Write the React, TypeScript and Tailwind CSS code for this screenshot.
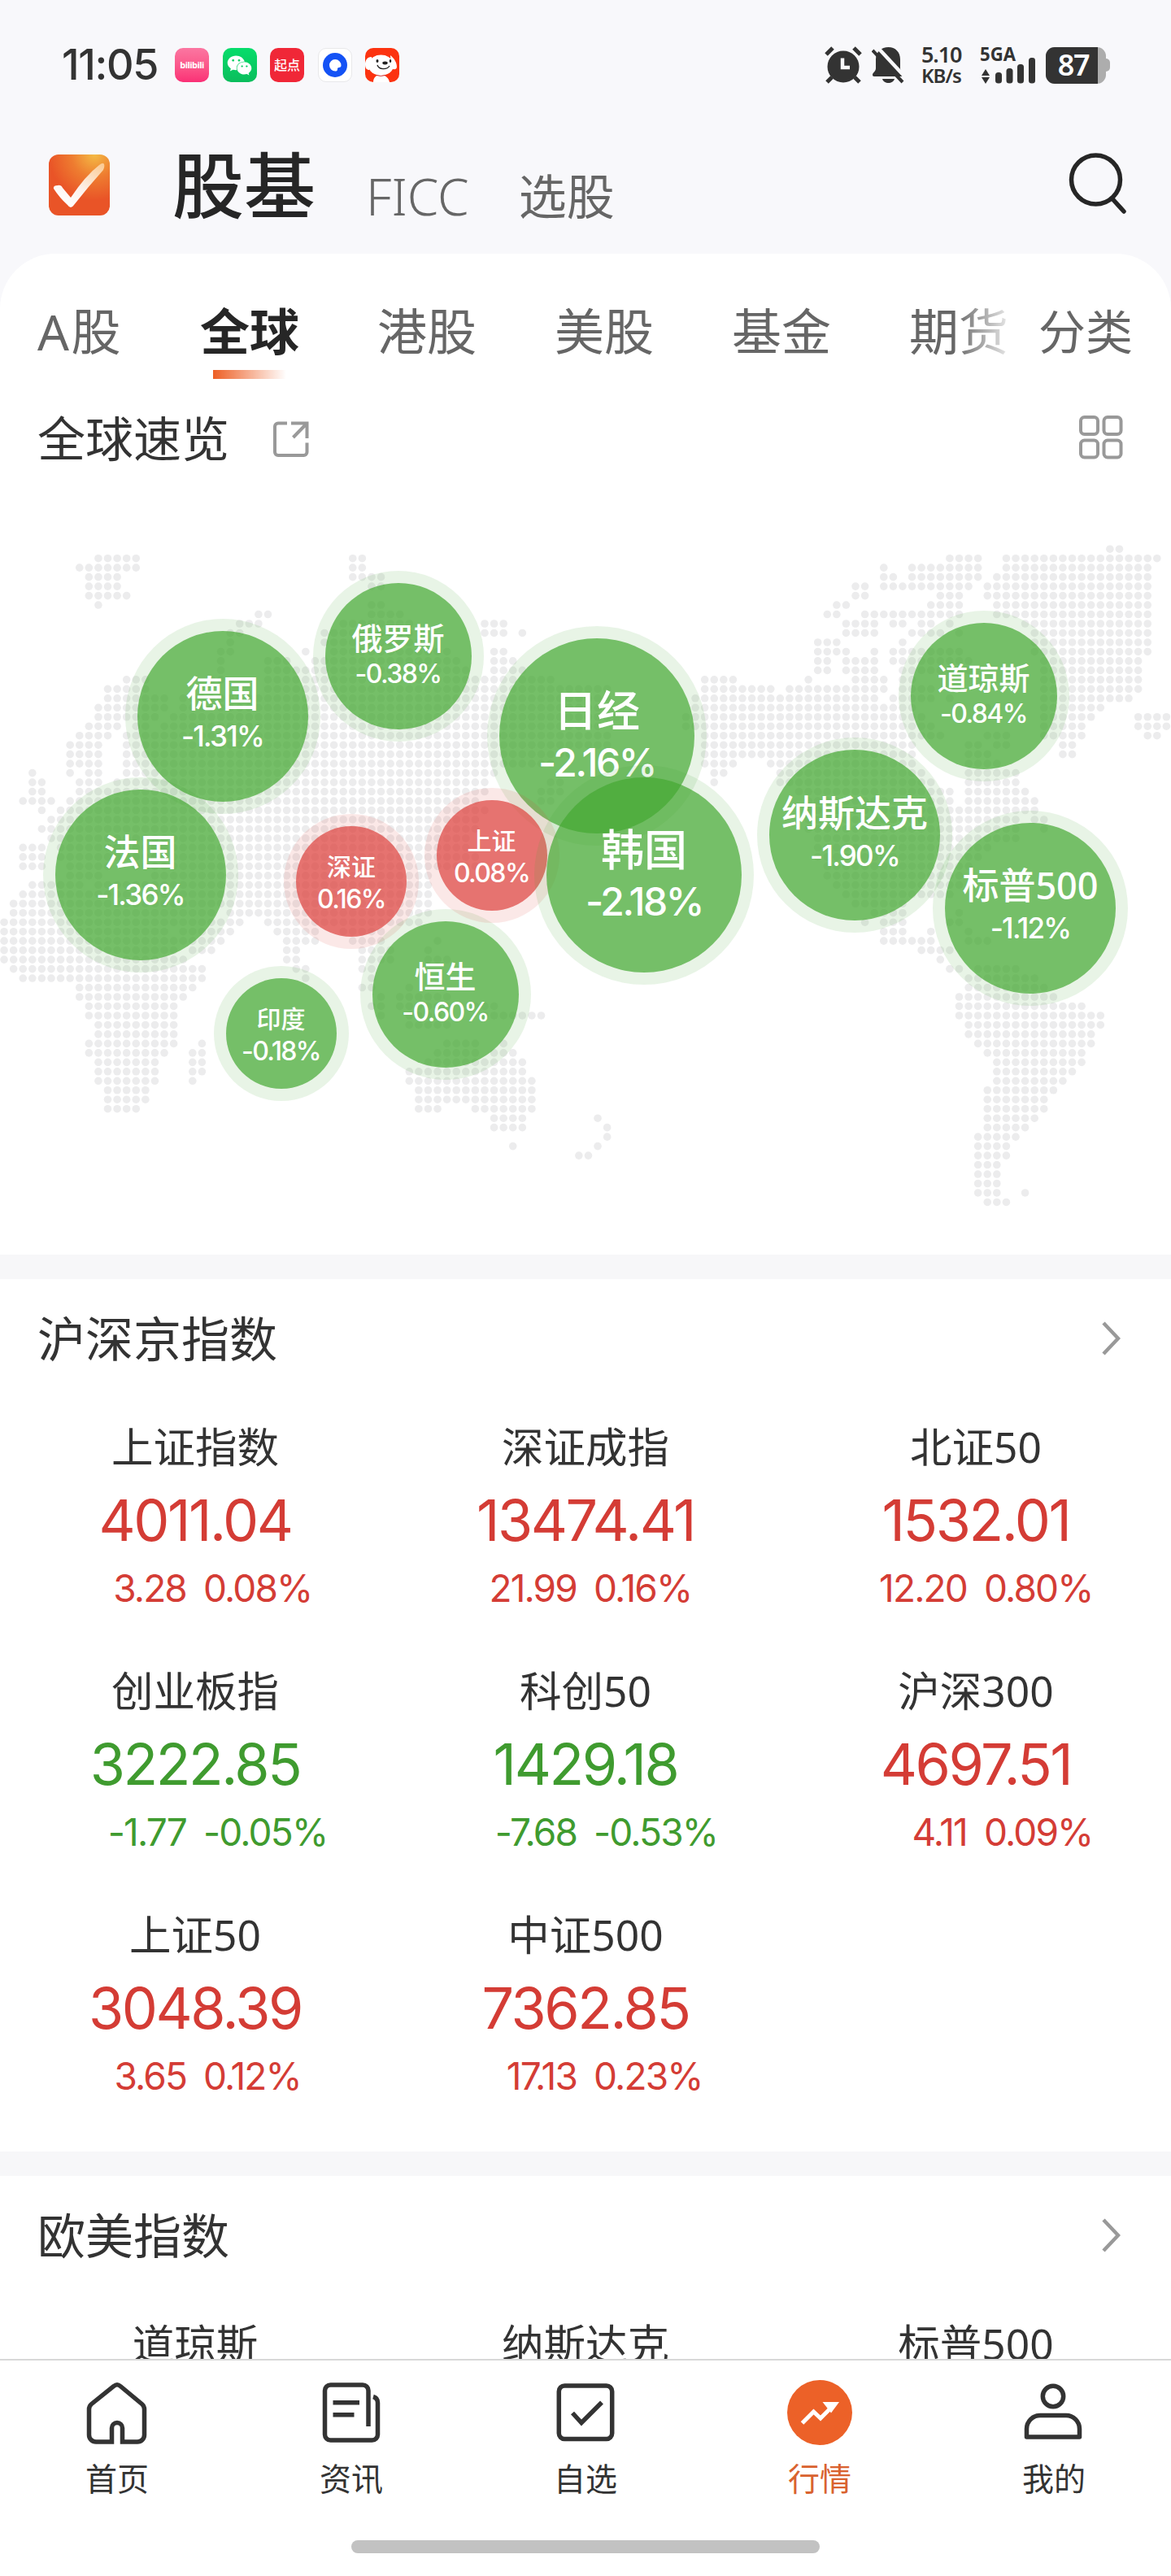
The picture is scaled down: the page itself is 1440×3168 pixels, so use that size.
import { FaWeixin } from 'react-icons/fa';

// Land dots of the world map, one entry per row, as "from-to" column ranges
const MAP_ROWS = [
  '117-118',
  '10-14 37-38 100-103 106-122',
  '8-14 37-38 93 96-103 106-121',
  '9-12 37-40 93-94 96-103 105-121',
  '9-12 39-40 90-91 93-102 104-121',
  '9-13 90-91 99-101 104-121',
  '10 39-40 88-89 98-101 105-121',
  '27-28 39-42 87-88 91-101 105-121',
  '25-27 36-43 51-53 89-92 94-95 97-98 100 108-121',
  '24-25 34-43 51-53 55 89-92 96-99 101 109-121',
  '24 34-44 86-88 95 109-121',
  '23-24 32 35-47 52-53 86-89 92 94-101 109-121',
  '23 28-30 33-48 52-54 86-87 89-92 94-102 110-120',
  '23 28-49 52-55 86-87 89-92 95-102 110-120',
  '13-15 22-23 28-58 74-77 85 90-93 95-96 110-120',
  '11-15 28-64 74-81 83-93 95-98 110-120',
  '11-17 19-64 73-92 94-98 100 110-119',
  '10-17 19-64 73-96 104-105 110-116',
  '10-16 18-66 72-97 104-105 110-115 120-123',
  '9-12 14-15 17-63 72-98 110-114 120-123',
  '8-11 13-64 74-99 104-106 110-114 121-122',
  '7-10 13-64 74-96 102-103 105-106 112-113',
  '7-10 13-60 74-96 102-104 112-113',
  '7-10 13-58 74-77 81-96 102-105',
  '3 7 9-10 13-52 75-76 82-97 102-107',
  '3-4 8-10 12-51 58-59 75 82-98 102-107',
  '3-4 8-51 57-59 84-100 102-108',
  '2-5 7-50 57-58 85-100 102-109',
  '4 6-51 85-109',
  '5-50 85-107 109-110',
  '4-50 85-107 110',
  '5-49 86-107',
  '2-4 6-49 86-104',
  '2-4 6-50 86-103',
  '2-4 7-11 14-50 87-102',
  '7-10 16-45 87-101',
  '3-8 10-45 88-101',
  '2-45 89-100',
  '1-45 90-95',
  '1-22 24-45 92-95 101',
  '0-25 28-44 91 93-95 100-101',
  '0-17 19-24 29-33 36-40 93-95 98 102',
  '0-17 18-23 30-33 37-40 46 93-98 102-104',
  '0-18 20-22 30-31 38-41 45 97-100',
  '0-19 30-31 38-41 45-47 99',
  '1-21 31-32 38-39 100-101 103-107',
  '2-21 32 39 102-109',
  '8-20 38-39 43 102-110',
  '8-19 40 42-47 101-111',
  '9-18 39-40 42-47 50-52 101-114',
  '9-18 40 43-46 51-57 101-116',
  '10-18 43-47 102-116',
  '10-18 102-115',
  '9-18 21 47-50 53 103-115',
  '9-17 20-21 46-50 52-54 104-114',
  '10-16 20-21 45-55 105-114',
  '10-16 20-21 43-55 105-113',
  '10-16 20 43-56 105-112',
  '11-15 44-56 104-111',
  '11-15 44-56 104-110',
  '11-14 44-46 50-56 104-110',
  '52-55 63 104-109',
  '52-55 64 104-108',
  '64 103-107',
  '54 63 103-106',
  '61-62 103-106',
  '103-105',
  '103-105',
  '103-105',
  '103-105 108',
  '104-106',
];

const MAP_TOP = 606;
const STEP_X = 11.587;
const STEP_Y = 11.475;

const dots = MAP_ROWS.flatMap((row, r) =>
  row.split(' ').flatMap((range) => {
    const [from, to = from] = range.split('-').map(Number);
    // the Americas sit a few pixels off the grid of the old world
    const origin = from >= 72 ? 9.2 : 5.05;
    return Array.from({ length: to - from + 1 }, (_, i) => ({
      x: origin + (from + i) * STEP_X,
      y: 675.2 - MAP_TOP + r * STEP_Y,
    }));
  })
);

const SIZES = {
  sm: { r: 68, ring: 83, name: 'text-[30px] leading-[44px]', pct: 'text-[32px] leading-[36px]' },
  md: { r: 90, ring: 105, name: 'text-[38px] leading-[44px]', pct: 'text-[32px] leading-[46px]' },
  lg: { r: 105, ring: 120, name: 'text-[45px] leading-[49px]', pct: 'text-[35px] leading-[56px]' },
  xl: { r: 120, ring: 135, name: 'text-[53px] leading-[65px]', pct: 'text-[48px] leading-[64px]' },
};

type Bubble = { name: string; pct: string; x: number; y: number; size: keyof typeof SIZES };

const BUBBLES: Bubble[] = [
  { name: '德国', pct: '-1.31%', x: 273.5, y: 880.5, size: 'lg' },
  { name: '法国', pct: '-1.36%', x: 172.5, y: 1075.5, size: 'lg' },
  { name: '俄罗斯', pct: '-0.38%', x: 489.5, y: 807, size: 'md' },
  { name: '深证', pct: '0.16%', x: 432, y: 1084, size: 'sm' },
  { name: '印度', pct: '-0.18%', x: 345.5, y: 1271, size: 'sm' },
  { name: '恒生', pct: '-0.60%', x: 547.5, y: 1222.5, size: 'md' },
  { name: '日经', pct: '-2.16%', x: 734, y: 905, size: 'xl' },
  { name: '上证', pct: '0.08%', x: 604.5, y: 1051.5, size: 'sm' },
  { name: '韩国', pct: '-2.18%', x: 792, y: 1076, size: 'xl' },
  { name: '道琼斯', pct: '-0.84%', x: 1209.5, y: 856, size: 'md' },
  { name: '纳斯达克', pct: '-1.90%', x: 1051, y: 1027, size: 'lg' },
  { name: '标普500', pct: '-1.12%', x: 1267, y: 1116.5, size: 'lg' },
];

const INDICES = [
  { name: '上证指数', value: '4011.04', change: '3.28', pct: '0.08%' },
  { name: '深证成指', value: '13474.41', change: '21.99', pct: '0.16%' },
  { name: '北证50', value: '1532.01', change: '12.20', pct: '0.80%' },
  { name: '创业板指', value: '3222.85', change: '-1.77', pct: '-0.05%' },
  { name: '科创50', value: '1429.18', change: '-7.68', pct: '-0.53%' },
  { name: '沪深300', value: '4697.51', change: '4.11', pct: '0.09%' },
  { name: '上证50', value: '3048.39', change: '3.65', pct: '0.12%' },
  { name: '中证500', value: '7362.85', change: '17.13', pct: '0.23%' },
];

function StatusBar() {
  return (
    <div className="flex h-[160px] shrink-0 items-center justify-between pl-[76px] pr-[75px] text-[#333]">
      <div className="flex items-center">
        <span className="w-[139px] font-['Inter'] text-[52px] font-medium tracking-[-0.025em]">11:05</span>
        <div className="flex gap-[16.5px]">
          <div className="flex size-[42px] items-center justify-center rounded-[10px] bg-gradient-to-b from-[#fb76a1] to-[#fa2f76]">
            <span className="text-[11px] font-bold tracking-[-0.5px] text-white">bilibili</span>
          </div>
          <div className="flex size-[42px] items-center justify-center rounded-[10px] bg-gradient-to-b from-[#06dd6b] to-[#0bbd5c]">
            <FaWeixin className="size-[31px] text-white" />
          </div>
          <div className="flex size-[42px] items-center justify-center rounded-[10px] bg-[#f02737]">
            <span className="text-[16px] font-medium text-white">起点</span>
          </div>
          <div className="flex size-[42px] items-center justify-center rounded-[10px] border border-[#e8e8ea] bg-white">
            <svg viewBox="0 0 30 30" className="size-[30px]">
              <circle cx="15" cy="15" r="15" fill="#1452f5" />
              <path d="M15 8a7.3 7.3 0 0 1 7.5 7.5c0 1.500-.8 2.500-2.500 2.500-1.500 0-2 .8-2 2.200 0 1.600-1 2.300-2.600 2.300A7.300 7.300 0 0 1 8 15.300 7.300 7.300 0 0 1 15 8z" fill="#fff" />
            </svg>
          </div>
          <svg viewBox="0 0 42 42" className="size-[42px] overflow-hidden rounded-[10px]">
            <rect width="42" height="42" fill="#fc3310" />
            <path d="M10 42c0-5 3-9 9-9s10 4 11 9z" fill="#fff" />
            <path d="M8 11c-6 0-8 5-8 9 0 5 2 7 5 7l4-5zM31 9c5 4 8 9 8 14 0 4-4 4-7 2z" fill="#fff" />
            <ellipse cx="19.500" cy="22" rx="15.500" ry="11.500" fill="#fff" />
            <ellipse cx="19.500" cy="17" rx="13" ry="8.500" fill="#fff" />
            <ellipse cx="15" cy="16" rx="1.500" ry="2" fill="#222" />
            <ellipse cx="31" cy="16" rx="1.300" ry="2" fill="#222" />
            <ellipse cx="24.500" cy="18.500" rx="3.200" ry="1.900" fill="#222" />
            <path d="M15 21c2 6 12 6 15 1" fill="none" stroke="#222" strokeWidth="1.300" />
            <path d="M14 33.500q5 2 11 0" fill="none" stroke="#c33" strokeWidth="1" />
          </svg>
        </div>
      </div>

      <div className="flex items-center">
        <svg viewBox="0 0 46 46" className="mr-[12px] size-[46px]">
          <circle cx="23" cy="25" r="19.500" fill="#333" />
          <path d="M2 10L10 2M44 10L36 2" stroke="#333" strokeWidth="5" />
          <path d="M9 38l-6 6M37 38l6 6" stroke="#333" strokeWidth="5" />
          <path d="M22 14.500V26h9" fill="none" stroke="#f8f8fb" strokeWidth="4.500" />
        </svg>
        <svg viewBox="0 0 42 46" className="mr-[19px] h-[46px] w-[42px]">
          <path d="M20.500 1C29 1 35 7 35 16v11c0 4 4 5 4 8 0 1.500-1 2-2.500 2H3c-1.500 0-2-.7-2-2 0-3 4-4 4-8V16C5 7 12 1 20.500 1z" fill="#333" />
          <path d="M13 40h15c-1 3.500-4 5-7.500 5S14 43.500 13 40z" fill="#333" />
          <path d="M6 0L46 43" stroke="#f8f8fb" strokeWidth="4.500" />
          <path d="M1 5L38 44" stroke="#333" strokeWidth="4" />
        </svg>
        <div className="flex w-[72px] flex-col font-['Noto_Sans'] font-semibold">
          <span className="text-[27px] leading-[25px] tracking-[-0.04em]">5.10</span>
          <span className="text-[24px] leading-[28px] tracking-[-0.04em]">KB/s</span>
        </div>
        <svg viewBox="0 0 70 46" className="mr-[11px] h-[46px] w-[70px] overflow-visible">
          <text x="0" y="17.500" className="font-['Noto_Sans'] text-[23px] font-bold" textLength="44" lengthAdjust="spacingAndGlyphs" fill="#333">
            5GA
          </text>
          <path d="M2 36l5-8 5 8zM2 38l5 8 5-8z" fill="#333" />
          <rect x="19" y="32" width="8" height="13.500" rx="3.500" fill="#333" />
          <rect x="32.500" y="27" width="8" height="18.500" rx="3.500" fill="#333" />
          <rect x="46" y="22" width="8" height="23.500" rx="3.500" fill="#333" />
          <rect x="60" y="14" width="8" height="31.500" rx="3.500" fill="#333" />
        </svg>
        <div className="flex items-center">
          <div className="flex h-[45px] w-[74px] overflow-hidden rounded-[11px] bg-[#adadad]">
            <div className="flex w-[64px] items-center justify-center bg-[#333] text-[36px] font-semibold tracking-[-0.04em] text-white">
              <span className="pl-1">87</span>
            </div>
          </div>
          <div className="h-[16px] w-[5px] rounded-r-[5px] bg-[#adadad]" />
        </div>
      </div>
    </div>
  );
}

function Header() {
  return (
    <div className="flex h-[152px] shrink-0 items-start pl-[60px] pr-[54px]">
      <svg viewBox="0 0 75 75" className="mt-[30px] size-[75px]">
        <defs>
          <radialGradient id="logoBg" cx="0.75" cy="0" r="0.75">
            <stop offset="0" stopColor="#f4bb45" />
            <stop offset="0.500" stopColor="#ee7c30" />
            <stop offset="1" stopColor="#e95427" />
          </radialGradient>
          <linearGradient id="logoTick" x1="1" y1="0" x2="0.300" y2="1">
            <stop offset="0" stopColor="#fbc98f" />
            <stop offset="0.600" stopColor="#fdf1ea" />
            <stop offset="1" stopColor="#fff" />
          </linearGradient>
        </defs>
        <rect width="75" height="75" rx="12" fill="url(#logoBg)" />
        <path d="M6 42q-1-4 5-4 4-1 6 3l10 12q18-27 35-40 5-4 6-1 1 3-1 7-18 20-36 43-4 6-8 0Q13 53 6 42z" fill="url(#logoTick)" />
      </svg>
      <h1 className="ml-[77px] text-[88px] leading-[134px] font-medium text-[#262626]">股基</h1>
      <span className="ml-[62px] mt-[36px] text-[62px] leading-[90px] font-light text-[#666]">FICC</span>
      <span className="ml-[61px] mt-[36px] text-[59px] leading-[90px] text-[#666]">选股</span>
      <svg viewBox="0 0 72 76" className="ml-auto mt-[27px] h-[76px] w-[72px]" fill="none" stroke="#262626" strokeWidth="5.500">
        <circle cx="33.500" cy="34" r="30" />
        <path d="M53.500 57L68 73" strokeLinecap="round" />
      </svg>
    </div>
  );
}

function Tabs() {
  return (
    <div className="flex h-[164px] shrink-0 items-start pl-[46px] pr-[47px] pt-[51px] text-[61px] leading-[90px] text-[#666]">
      <div className="flex w-[1194px] shrink-0 gap-[96px] overflow-hidden whitespace-nowrap [mask-image:linear-gradient(to_right,#000_94.500%,transparent_101%)]">
        <span className="w-[104px] tracking-[0.04em]">A股</span>
        <div className="flex flex-col items-center">
          <span className="font-bold text-[#262626]">全球</span>
          <div className="mt-[2px] h-[11px] w-[90px] bg-gradient-to-r from-[#ed5f25] to-transparent" />
        </div>
        <span>港股</span>
        <span>美股</span>
        <span>基金</span>
        <span>期货</span>
      </div>
      <span className="ml-auto text-[58px]">分类</span>
    </div>
  );
}

function WorldMap() {
  return (
    <div className="relative h-[937px] shrink-0">
      <svg viewBox="0 0 1440 937" className="h-[937px] w-[1440px]" fill="#ececed">
        {dots.map((d, i) => (
          <circle key={i} cx={d.x} cy={d.y} r="4.800" />
        ))}
      </svg>
      {BUBBLES.map((b) => {
        const s = SIZES[b.size];
        const down = b.pct.startsWith('-');
        return (
          <div
            key={b.name}
            className={`absolute flex items-center justify-center rounded-full ${down ? 'bg-[#44a832]/12' : 'bg-[#dd413d]/12'}`}
            style={{ left: b.x - s.ring, top: b.y - s.ring - MAP_TOP, width: s.ring * 2, height: s.ring * 2 }}
          >
            <div
              className={`flex flex-col items-center justify-center rounded-full whitespace-nowrap text-white ${
                down ? 'bg-[#44a832]/70' : 'bg-[#dd413d]/70'
              }`}
              style={{ width: s.r * 2, height: s.r * 2 }}
            >
              <span className={`font-medium ${s.name}`}>{b.name}</span>
              <span className={`font-['Inter'] font-medium tracking-[-0.05em] ${s.pct}`}>{b.pct}</span>
            </div>
          </div>
        );
      })}
    </div>
  );
}

function SectionTitle({ title }: { title: string }) {
  return (
    <div className="flex h-[146px] shrink-0 items-center justify-between pl-[46px] pr-[62px]">
      <h2 className="text-[59px] leading-[88px] text-[#333]">{title}</h2>
      <svg viewBox="0 0 24 44" className="h-[44px] w-[24px]" fill="none" stroke="#999" strokeWidth="4.500">
        <path d="M3 3l18 19L3 41" />
      </svg>
    </div>
  );
}

function IndexCell({ name, value, change, pct }: (typeof INDICES)[number]) {
  return (
    <div className="h-[300px] pt-[22px]">
      <div className="text-center text-[51.5px] leading-[76px] text-[#333]">{name}</div>
      <div className={`font-['Inter'] ${change.startsWith('-') ? 'text-[#3f9b2f]' : 'text-[#d43c35]'}`}>
        <div className="mt-[8px] text-center text-[70px] leading-[90px] tracking-[-0.035em]">{value}</div>
        <div className="flex gap-[21px] text-[46px] leading-[76px] tracking-[-0.04em]">
          <span className="w-[229px] text-right">{change}</span>
          <span>{pct}</span>
        </div>
      </div>
    </div>
  );
}

function BottomNav() {
  const line = { viewBox: '0 0 80 80', className: 'size-[80px]', fill: 'none', stroke: '#333', strokeWidth: 5.5 };
  return (
    <nav className="h-[267px] shrink-0 border-t-2 border-[#d8d8d8] bg-white">
      <div className="grid grid-cols-5 pt-[24px] text-center text-[39px] leading-[60px] text-[#333]">
        <div className="flex flex-col items-center gap-[11px]">
          <svg {...line}>
            <path d="M33.500 76H14a8.500 8.500 0 0 1-8.500-8.500V36q0-4 3-6.500L36 7.500q4-3.500 8 0l26.500 22q3 2.500 3 6.500v31.500A8.500 8.500 0 0 1 65 76H46.500V59a6.500 6.500 0 0 0-13 0z" />
          </svg>
          <span>首页</span>
        </div>
        <div className="flex flex-col items-center gap-[11px]">
          <svg {...line}>
            <path d="M61 57V13a7 7 0 0 0-7-7H14.500a7 7 0 0 0-7 7v54a7 7 0 0 0 7 7h51a7 7 0 0 0 7-7V28q0-6-5.500-7.500" />
            <path d="M17.500 27.700H50M17.500 42.700H43.500" />
          </svg>
          <span>资讯</span>
        </div>
        <div className="flex flex-col items-center gap-[11px]">
          <svg {...line}>
            <rect x="7.300" y="7" width="65.400" height="65.500" rx="7" />
            <path d="M24 40.500L35 52.500 60 27.500" />
          </svg>
          <span>自选</span>
        </div>
        <div className="flex flex-col items-center gap-[11px] text-[#d9622f]">
          <svg viewBox="0 0 80 80" className="size-[80px]">
            <circle cx="40" cy="40" r="40" fill="#ec6128" />
            <path d="M18.500 53L32.500 39 41 47 56 32" fill="none" stroke="#fff" strokeWidth="5" />
            <path d="M43.500 27H64L54 40.500z" fill="#fff" />
          </svg>
          <span>行情</span>
        </div>
        <div className="flex flex-col items-center gap-[11px]">
          <svg {...line}>
            <circle cx="39" cy="20" r="12.700" />
            <path d="M6.500 70V60a16.500 16.500 0 0 1 16.500-16.500h32A16.500 16.500 0 0 1 71.500 60v10z" strokeLinejoin="round" />
          </svg>
          <span>我的</span>
        </div>
      </div>
      <div className="mx-auto mt-[46px] h-[16px] w-[576px] rounded-full bg-[#c2c2c2]" />
    </nav>
  );
}

export default function App() {
  return (
    <div className="flex h-[3168px] w-[1440px] flex-col overflow-hidden bg-[#f8f8fb] font-['Noto_Sans','Noto_Sans_CJK_SC',sans-serif]">
      <StatusBar />
      <Header />

      <div className="flex min-h-0 flex-1 flex-col overflow-hidden rounded-t-[68px] bg-white">
        <Tabs />

        {/* Overview title */}
        <div className="flex h-[130px] shrink-0 items-start pl-[46px] pr-[59px] pt-[20px]">
          <h2 className="text-[59px] leading-[86px] text-[#333]">全球速览</h2>
          <svg viewBox="0 0 45 45" className="ml-[53px] mt-[22px] size-[45px]" fill="none" stroke="#999" strokeWidth="4">
            <path d="M18 2.500H7a4 4 0 0 0-4 4V38a4 4 0 0 0 4 4h31.500a4 4 0 0 0 4-4V26.500" />
            <path d="M23 2.500h19.500V21M42 3L25.500 20" />
          </svg>
          <svg viewBox="0 0 54 54" className="ml-auto mt-[15px] size-[54px]" fill="none" stroke="#999" strokeWidth="4">
            <rect x="2" y="2" width="21" height="21" rx="4.500" />
            <rect x="30.500" y="2" width="21" height="21" rx="4.500" />
            <rect x="2" y="30.500" width="21" height="21" rx="4.500" />
            <rect x="30.500" y="30.500" width="21" height="21" rx="4.500" />
          </svg>
        </div>

        <WorldMap />

        <div className="h-[30px] shrink-0 bg-[#f7f7f9]" />

        <SectionTitle title="沪深京指数" />
        <div className="grid h-[927px] shrink-0 grid-cols-3 content-start">
          {INDICES.map((item) => (
            <IndexCell key={item.name} {...item} />
          ))}
        </div>

        <div className="h-[30px] shrink-0 bg-[#f7f7f9]" />

        <SectionTitle title="欧美指数" />
        <div className="grid shrink-0 grid-cols-3 pt-[22px] text-center text-[51.5px] leading-[76px] text-[#333]">
          <span>道琼斯</span>
          <span>纳斯达克</span>
          <span>标普500</span>
        </div>
      </div>

      <BottomNav />
    </div>
  );
}
